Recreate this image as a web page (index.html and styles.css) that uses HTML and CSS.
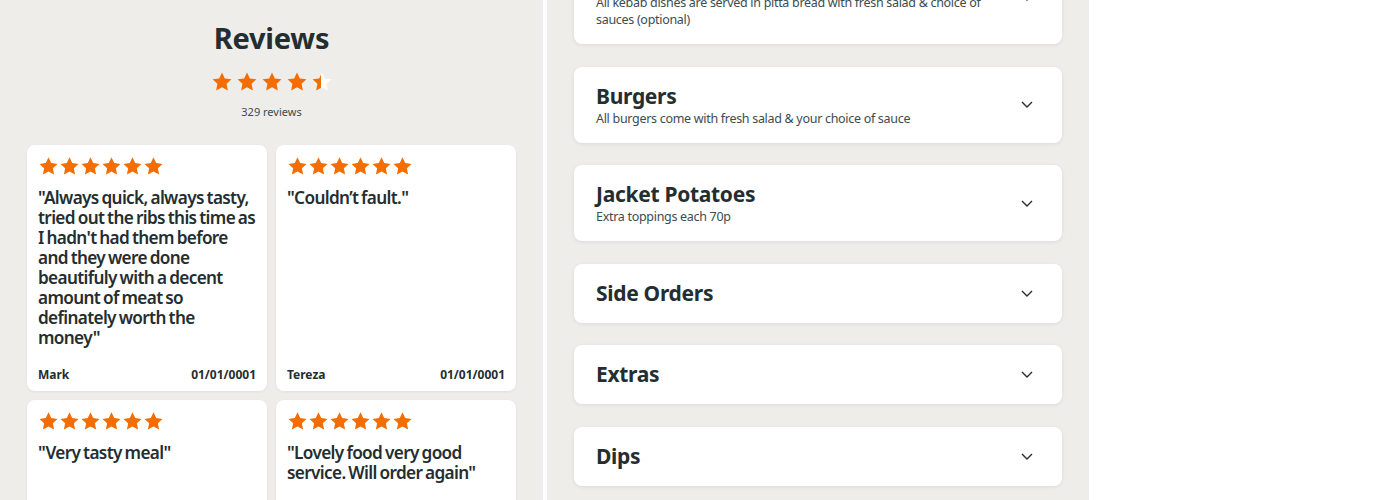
FILE: index.html
```html
<!DOCTYPE html>
<html lang="en">
<head>
    <meta charset="UTF-8">
    <meta name="viewport" content="width=device-width, initial-scale=1.0">
    <title>Menu and Reviews</title>
    <link rel="stylesheet" href="styles.css">
</head>
<body>
    <svg width="0" height="0" class="defs">
        <defs>
            <symbol id="star" viewBox="0 0 24 24">
                <path d="M12 1.5l3.1 6.6 7.2.9-5.3 5 1.4 7.2L12 17.6l-6.4 3.6 1.4-7.2-5.3-5 7.2-.9z"/>
            </symbol>
            <linearGradient id="halfFill" x1="0" x2="1" y1="0" y2="0">
                <stop offset="45%" stop-color="#f36d00"/>
                <stop offset="45%" stop-color="#ffffff"/>
            </linearGradient>
        </defs>
    </svg>

    <div class="reviews">
        <h2 class="reviews-title">Reviews</h2>
        <div class="rating">
            <svg class="big-star"><use href="#star"/></svg>
            <svg class="big-star"><use href="#star"/></svg>
            <svg class="big-star"><use href="#star"/></svg>
            <svg class="big-star"><use href="#star"/></svg>
            <svg class="big-star half"><use href="#star"/></svg>
        </div>
        <p class="review-count">329 reviews</p>

        <div class="review-grid">
            <div class="review-card">
                <div class="stars">
                    <svg><use href="#star"/></svg><svg><use href="#star"/></svg><svg><use href="#star"/></svg><svg><use href="#star"/></svg><svg><use href="#star"/></svg><svg><use href="#star"/></svg>
                </div>
                <p class="quote">"Always quick, always tasty, tried out the ribs this time as I hadn't had them before and they were done beautifuly with a decent amount of meat so definately worth the money"</p>
                <div class="review-footer">
                    <span>Mark</span>
                    <span>01/01/0001</span>
                </div>
            </div>
            <div class="review-card">
                <div class="stars">
                    <svg><use href="#star"/></svg><svg><use href="#star"/></svg><svg><use href="#star"/></svg><svg><use href="#star"/></svg><svg><use href="#star"/></svg><svg><use href="#star"/></svg>
                </div>
                <p class="quote">"Couldn’t fault."</p>
                <div class="review-footer">
                    <span>Tereza</span>
                    <span>01/01/0001</span>
                </div>
            </div>
            <div class="review-card">
                <div class="stars">
                    <svg><use href="#star"/></svg><svg><use href="#star"/></svg><svg><use href="#star"/></svg><svg><use href="#star"/></svg><svg><use href="#star"/></svg><svg><use href="#star"/></svg>
                </div>
                <p class="quote">"Very tasty meal"</p>
                <div class="review-footer">
                    <span>Dan</span>
                    <span>01/01/0001</span>
                </div>
            </div>
            <div class="review-card">
                <div class="stars">
                    <svg><use href="#star"/></svg><svg><use href="#star"/></svg><svg><use href="#star"/></svg><svg><use href="#star"/></svg><svg><use href="#star"/></svg><svg><use href="#star"/></svg>
                </div>
                <p class="quote">"Lovely food very good service. Will order again"</p>
                <div class="review-footer">
                    <span>Sam</span>
                    <span>01/01/0001</span>
                </div>
            </div>
        </div>
    </div>

    <div class="menu">
        <div class="menu-list">
            <div class="category">
                <div class="category-text">
                    <h3>Kebabs</h3>
                    <p>All kebab dishes are served in pitta bread with fresh salad &amp; choice of sauces (optional)</p>
                </div>
                <svg class="chevron" viewBox="0 0 12 7"><path d="M1 1l5 5 5-5"/></svg>
            </div>
            <div class="category">
                <div class="category-text">
                    <h3>Burgers</h3>
                    <p>All burgers come with fresh salad &amp; your choice of sauce</p>
                </div>
                <svg class="chevron" viewBox="0 0 12 7"><path d="M1 1l5 5 5-5"/></svg>
            </div>
            <div class="category">
                <div class="category-text">
                    <h3>Jacket Potatoes</h3>
                    <p>Extra toppings each 70p</p>
                </div>
                <svg class="chevron" viewBox="0 0 12 7"><path d="M1 1l5 5 5-5"/></svg>
            </div>
            <div class="category">
                <div class="category-text">
                    <h3>Side Orders</h3>
                </div>
                <svg class="chevron" viewBox="0 0 12 7"><path d="M1 1l5 5 5-5"/></svg>
            </div>
            <div class="category">
                <div class="category-text">
                    <h3>Extras</h3>
                </div>
                <svg class="chevron" viewBox="0 0 12 7"><path d="M1 1l5 5 5-5"/></svg>
            </div>
            <div class="category">
                <div class="category-text">
                    <h3>Dips</h3>
                </div>
                <svg class="chevron" viewBox="0 0 12 7"><path d="M1 1l5 5 5-5"/></svg>
            </div>
        </div>
    </div>
</body>
</html>
```

FILE: styles.css
```css
body {
    font-family: "Noto Sans", Arial, sans-serif;
    color: #242e30;
    background-color: #fff;
    margin: 0;
    padding: 0;
    display: flex;
    align-items: flex-start;
    height: 500px;
    overflow: hidden;
}
.defs {
    position: absolute;
}
.reviews {
    width: 543px;
    height: 500px;
    overflow: hidden;
    box-sizing: border-box;
    padding: 18px 27px 0;
    background-color: #efedea;
}
.reviews-title {
    margin: 0;
    text-align: center;
    font-size: 29px;
    line-height: 40px;
    font-weight: 700;
    letter-spacing: -0.2px;
}
.rating {
    display: flex;
    justify-content: center;
    gap: 3px;
    margin-top: 13px;
}
.big-star {
    width: 22px;
    height: 22px;
    fill: #f36d00;
}
.big-star.half {
    fill: url(#halfFill);
}
.review-count {
    margin: 11px 0 0;
    text-align: center;
    font-size: 11px;
    line-height: 16px;
    color: #3c4c4f;
}
.review-grid {
    display: grid;
    grid-template-columns: 1fr 1fr;
    grid-auto-rows: 246px;
    gap: 9px;
    margin-top: 25px;
}
.review-card {
    display: flex;
    flex-direction: column;
    background-color: #fff;
    border-radius: 8px;
    padding: 11px 11px 7px;
    box-shadow: 0 1px 3px rgba(0, 0, 0, 0.06);
}
.stars {
    display: flex;
}
.stars svg {
    width: 21px;
    height: 21px;
    fill: #f36d00;
}
.quote {
    margin: 11px 0 0;
    font-size: 17.2px;
    line-height: 20px;
    font-weight: 600;
    letter-spacing: -0.65px;
    word-spacing: -1px;
}
.review-footer {
    display: flex;
    justify-content: space-between;
    margin-top: auto;
    font-size: 12px;
    line-height: 18px;
    font-weight: 700;
}
.menu {
    width: 542px;
    height: 500px;
    margin-left: 4px;
    box-sizing: border-box;
    padding: 0 27px;
    background-color: #efedea;
}
.menu-list {
    display: flex;
    flex-direction: column;
    gap: 22.6px;
    margin-top: -49px;
}
.category {
    display: flex;
    align-items: center;
    justify-content: space-between;
    background-color: #fff;
    border-radius: 8px;
    padding: 16px 22px;
    box-shadow: 0 1px 4px rgba(0, 0, 0, 0.08);
}
.category-text {
    max-width: 400px;
}
.category h3 {
    margin: 0;
    font-size: 21px;
    line-height: 27px;
    font-weight: 700;
    letter-spacing: -0.3px;
}
.category p {
    margin: 0;
    font-size: 12.5px;
    line-height: 17px;
    letter-spacing: -0.3px;
    color: #3c4c4f;
}
.chevron {
    width: 12px;
    height: 7px;
    margin-right: 7px;
    fill: none;
    stroke: #242e30;
    stroke-width: 1.4;
}
```
